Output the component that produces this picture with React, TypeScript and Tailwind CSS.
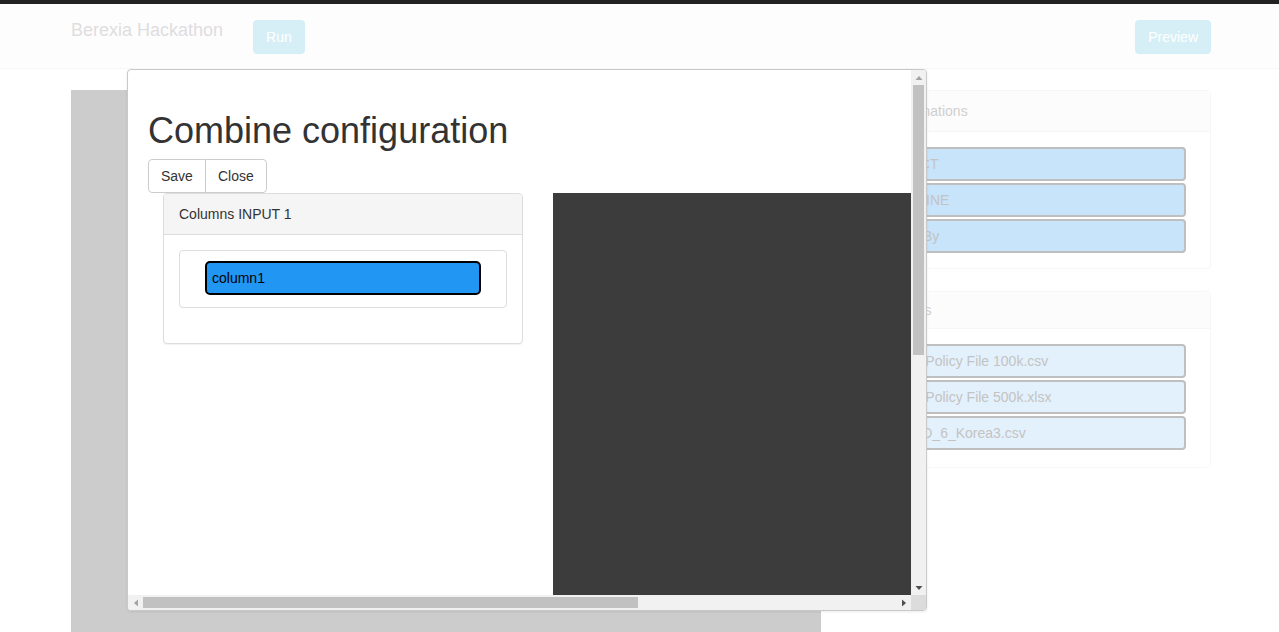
import React from "react";

const transformations = ["SELECT", "COMBINE", "GroupBy"];
const inputs = [
  "Sample Policy File 100k.csv",
  "Sample Policy File 500k.xlsx",
  "CODE_D_6_Korea3.csv",
];

function Arrow({ dir, dark }: { dir: "up" | "down" | "left" | "right"; dark?: boolean }) {
  const fill = dark ? "#505050" : "#a3a3a3";
  const pts =
    dir === "up"
      ? "0.5,6 7.5,6 4,2"
      : dir === "down"
      ? "0.5,2 7.5,2 4,6"
      : dir === "left"
      ? "6,0.5 6,7.5 2,4"
      : "2,0.5 2,7.5 6,4";
  return (
    <svg width="8" height="8" viewBox="0 0 8 8">
      <polygon points={pts} fill={fill} />
    </svg>
  );
}

export default function App() {
  return (
    <div className="relative h-[632px] w-full overflow-hidden bg-white font-['Liberation_Sans',Arial,sans-serif] text-[14px] text-[#333]">
      {/* top strip */}
      <div className="h-[4px] bg-[#222222]" />

      {/* navbar (under backdrop) */}
      <div className="h-[65px] border-b border-[#f8f8f8] bg-[#fdfdfd]">
        <div className="ml-[56px] flex w-[1170px] items-start px-[15px] pt-[16px]">
          <div className="text-[18px] leading-[20px] text-[#dedede]">Berexia Hackathon</div>
          <button className="ml-[30px] rounded-[4px] border border-[#d3eef6] bg-[#d6eff7] px-[12px] py-[6px] text-[14px] leading-[20px] text-white">
            Run
          </button>
          <button className="ml-auto rounded-[4px] border border-[#d3eef6] bg-[#d6eff7] px-[12px] py-[6px] text-[14px] leading-[20px] text-white">
            Preview
          </button>
        </div>
      </div>

      {/* main content (under backdrop) */}
      <div className="ml-[56px] mt-[21px] flex w-[1170px]">
        <div className="w-[780px] px-[15px]">
          <div className="h-[600px] bg-[#cccccc]" />
        </div>
        <div className="w-[390px] px-[15px]">
          <div className="mb-[22px] rounded-[4px] border border-[#f6f6f6] bg-white">
            <div className="border-b border-[#f6f6f6] bg-[#fcfcfc] px-[15px] py-[10px] leading-[20px] text-[#cfcfcf]">
              Transformations
            </div>
            <div className="p-[15px] pb-[13px]">
              {transformations.map((t) => (
                <div
                  key={t}
                  className="mb-[2px] w-[319px] rounded-[4px] border-2 border-[#bfbfbf] bg-[#c7e4fb] py-[5px] pl-[15px] leading-[20px] text-[#c3c3c3]"
                >
                  {t}
                </div>
              ))}
            </div>
          </div>
          <div className="rounded-[4px] border border-[#f6f6f6] bg-white">
            <div className="border-b border-[#f6f6f6] bg-[#fcfcfc] px-[15px] py-[8px] leading-[20px] text-[#cfcfcf]">
              Input Files
            </div>
            <div className="p-[15px] pb-[15px]">
              {inputs.map((t) => (
                <div
                  key={t}
                  className="mb-[2px] w-[319px] rounded-[4px] border-2 border-[#bfbfbf] bg-[#e3f1fc] py-[5px] pl-[5px] leading-[20px] text-[#c3c3c3]"
                >
                  {t}
                </div>
              ))}
            </div>
          </div>
        </div>
      </div>

      {/* modal */}
      <div className="absolute left-[127px] top-[69px] flex h-[542px] w-[800px] flex-col overflow-hidden rounded-[4px] border border-[#c9c9c9] bg-white shadow-[0_1px_3px_rgba(0,0,0,0.08)]">
        <div className="flex min-h-0 flex-1">
          {/* scrolled content viewport */}
          <div className="min-w-0 flex-1 overflow-hidden">
            <div className="h-[963px] w-[1191px] p-[20px]">
              <h1 className="mt-[21px] text-[36px] font-normal leading-[40px] text-[#333]">
                Combine configuration
              </h1>
              <div className="mt-[8px] flex">
                <button className="rounded-l-[4px] border border-[#cccccc] bg-white px-[12px] py-[6px] leading-[20px] text-[#333]">
                  Save
                </button>
                <button className="-ml-px rounded-r-[4px] border border-[#cccccc] bg-white px-[12px] py-[6px] leading-[20px] text-[#333]">
                  Close
                </button>
              </div>
              <div className="flex">
                <div className="w-[390px] shrink-0 px-[15px]">
                  <div className="rounded-[4px] border border-[#dddddd] bg-white shadow-[0_1px_1px_rgba(0,0,0,0.05)]">
                    <div className="rounded-t-[3px] border-b border-[#dddddd] bg-[#f5f5f5] px-[15px] py-[10px] leading-[20px] text-[#333]">
                      Columns INPUT 1
                    </div>
                    <div className="p-[15px]">
                      <div className="mb-[20px] rounded-[4px] border border-[#dddddd] px-[25px] pb-[12px] pt-[10px]">
                        <div className="rounded-[5px] border-2 border-black bg-[#2196f3] py-[5px] pl-[5px] leading-[20px] text-black">
                          column1
                        </div>
                      </div>
                    </div>
                  </div>
                </div>
                <div className="w-[720px] shrink-0 px-[15px]">
                  <div className="h-[820px] bg-[#3c3c3c]" />
                </div>
              </div>
            </div>
          </div>
          {/* vertical scrollbar */}
          <div className="flex w-[15px] shrink-0 flex-col bg-[#f1f1f1]">
            <div className="flex h-[15px] items-center justify-center">
              <Arrow dir="up" />
            </div>
            <div className="flex-1 px-[2px]">
              <div className="h-[270px] bg-[#c1c1c1]" />
            </div>
            <div className="flex h-[15px] items-center justify-center">
              <Arrow dir="down" dark />
            </div>
          </div>
        </div>
        {/* horizontal scrollbar */}
        <div className="flex h-[15px] shrink-0">
          <div className="flex flex-1 bg-[#f1f1f1]">
            <div className="flex w-[15px] items-center justify-center">
              <Arrow dir="left" />
            </div>
            <div className="flex-1 py-[2px]">
              <div className="h-full w-[495px] bg-[#c1c1c1]" />
            </div>
            <div className="flex w-[15px] items-center justify-center">
              <Arrow dir="right" dark />
            </div>
          </div>
          <div className="w-[15px] bg-[#dcdcdc]" />
        </div>
      </div>
    </div>
  );
}
